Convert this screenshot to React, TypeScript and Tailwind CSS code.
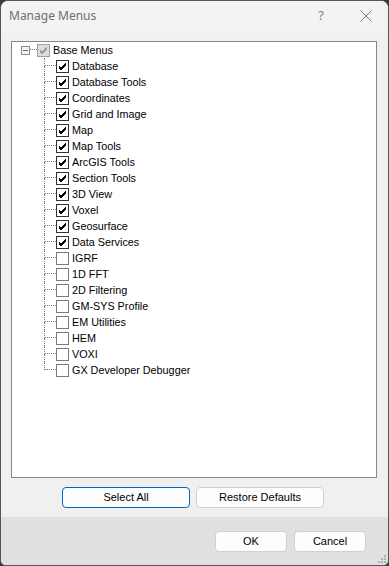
import React from 'react';

const ITEMS: { label: string; checked: boolean }[] = [
  { label: 'Database', checked: true },
  { label: 'Database Tools', checked: true },
  { label: 'Coordinates', checked: true },
  { label: 'Grid and Image', checked: true },
  { label: 'Map', checked: true },
  { label: 'Map Tools', checked: true },
  { label: 'ArcGIS Tools', checked: true },
  { label: 'Section Tools', checked: true },
  { label: '3D View', checked: true },
  { label: 'Voxel', checked: true },
  { label: 'Geosurface', checked: true },
  { label: 'Data Services', checked: true },
  { label: 'IGRF', checked: false },
  { label: '1D FFT', checked: false },
  { label: '2D Filtering', checked: false },
  { label: 'GM-SYS Profile', checked: false },
  { label: 'EM Utilities', checked: false },
  { label: 'HEM', checked: false },
  { label: 'VOXI', checked: false },
  { label: 'GX Developer Debugger', checked: false },
];

const Check = ({ color }: { color: string }) => (
  <svg width="11" height="11" viewBox="0 0 11 11" className="block">
    <path d="M2 5 L4 7 L9 2 M2 6 L4 8 L9 3 M2 7 L4 9 L9 4" stroke={color} strokeWidth="1" fill="none" />
  </svg>
);

const CheckBox = ({ checked, disabled }: { checked: boolean; disabled?: boolean }) => {
  if (disabled) {
    return (
      <div className="w-[13px] h-[13px] border border-[#a0a0a0] bg-[#dcdcdc] flex items-center justify-center shrink-0">
        <Check color="#9a9a9a" />
      </div>
    );
  }
  return (
    <div
      className={`w-[13px] h-[13px] border bg-white flex items-center justify-center shrink-0 ${
        checked ? 'border-[#333333]' : 'border-[#7a7a7a]'
      }`}
    >
      {checked && <Check color="#000000" />}
    </div>
  );
};

const TreeRow = ({ label, checked, last }: { label: string; checked: boolean; last: boolean }) => (
  <div className="flex items-center h-[16px]">
    <div className="w-[12px] h-[16px] flex flex-col shrink-0">
      <div className="h-[8px] border-l border-b border-dotted border-[#7f7f7f]" />
      <div className={`h-[8px] ${last ? '' : 'border-l border-dotted border-[#7f7f7f]'}`} />
    </div>
    <CheckBox checked={checked} />
    <span className="ml-[3px] text-[10.8px] leading-[16px] text-black whitespace-nowrap">{label}</span>
  </div>
);

const DialogButton = ({ label, focused, className }: { label: string; focused?: boolean; className: string }) => (
  <button
    className={`h-[21px] rounded-[4px] text-[11px] text-black bg-[#fdfdfd] border ${
      focused ? 'border-[#0067c0] border-[1.5px]' : 'border-[#d0d0d0]'
    } ${className}`}
  >
    {label}
  </button>
);

export default function App() {
  return (
    <div className="w-[389px] h-[566px] bg-[#3a3a3a]" style={{ fontFamily: '"Liberation Sans", Arial, sans-serif' }}>
      <div className="w-[389px] h-[566px] border border-[#555555] rounded-t-[8px] rounded-b-[6px] bg-[#f0f0f0] overflow-hidden flex flex-col">
        <div className="h-[30px] bg-[#f3f3f3] flex items-center pl-[8px] shrink-0">
          <span className="text-[12px] text-[#6e6e6e]" style={{ fontFamily: '"Noto Sans", sans-serif' }}>
            Manage Menus
          </span>
          <span className="ml-auto mr-[36px] text-[13px] text-[#808080]" style={{ fontFamily: '"Noto Sans", sans-serif' }}>
            ?
          </span>
          <svg width="12" height="12" viewBox="0 0 12 12" className="mr-[16px]">
            <path d="M0.5 0.5 L11.5 11.5 M11.5 0.5 L0.5 11.5" stroke="#808080" strokeWidth="1" />
          </svg>
        </div>
        <div className="flex-1 flex flex-col px-[10px] pt-[10px]">
          <div className="h-[437px] w-[366px] border border-[#828790] bg-white pl-[9px]">
            <div className="flex items-center h-[16px]">
              <div className="w-[9px] h-[9px] border border-[#8f8f8f] bg-[#f4f4f4] flex items-center justify-center shrink-0">
                <div className="w-[5px] h-px bg-[#4a6fb0]" />
              </div>
              <div className="w-[7px] h-[8px] border-b border-dotted border-[#7f7f7f] self-start shrink-0" />
              <CheckBox checked disabled />
              <span className="ml-[3px] text-[10.8px] leading-[16px] text-black">Base Menus</span>
            </div>
            <div className="ml-[23px]">
              {ITEMS.map((it, i) => (
                <TreeRow key={it.label} label={it.label} checked={it.checked} last={i === ITEMS.length - 1} />
              ))}
            </div>
          </div>
          <div className="flex gap-[6px] mt-[9px] ml-[51px]">
            <DialogButton label="Select All" focused className="w-[128px]" />
            <DialogButton label="Restore Defaults" className="w-[128px]" />
          </div>
        </div>
        <div className="h-[48px] bg-[#e0e0e0] flex items-start justify-end gap-[7px] pt-[14px] pr-[22px] shrink-0 relative">
          <DialogButton label="OK" className="w-[72px] h-[20px]" />
          <DialogButton label="Cancel" className="w-[72px] h-[20px]" />
          <svg width="8" height="8" viewBox="0 0 8 8" className="absolute right-[2px] bottom-[2px]">
            <rect x="6" y="0" width="2" height="2" fill="#b0b0b0" />
            <rect x="3" y="3" width="2" height="2" fill="#b0b0b0" />
            <rect x="6" y="3" width="2" height="2" fill="#b0b0b0" />
            <rect x="0" y="6" width="2" height="2" fill="#b0b0b0" />
            <rect x="3" y="6" width="2" height="2" fill="#b0b0b0" />
            <rect x="6" y="6" width="2" height="2" fill="#b0b0b0" />
          </svg>
        </div>
      </div>
    </div>
  );
}
